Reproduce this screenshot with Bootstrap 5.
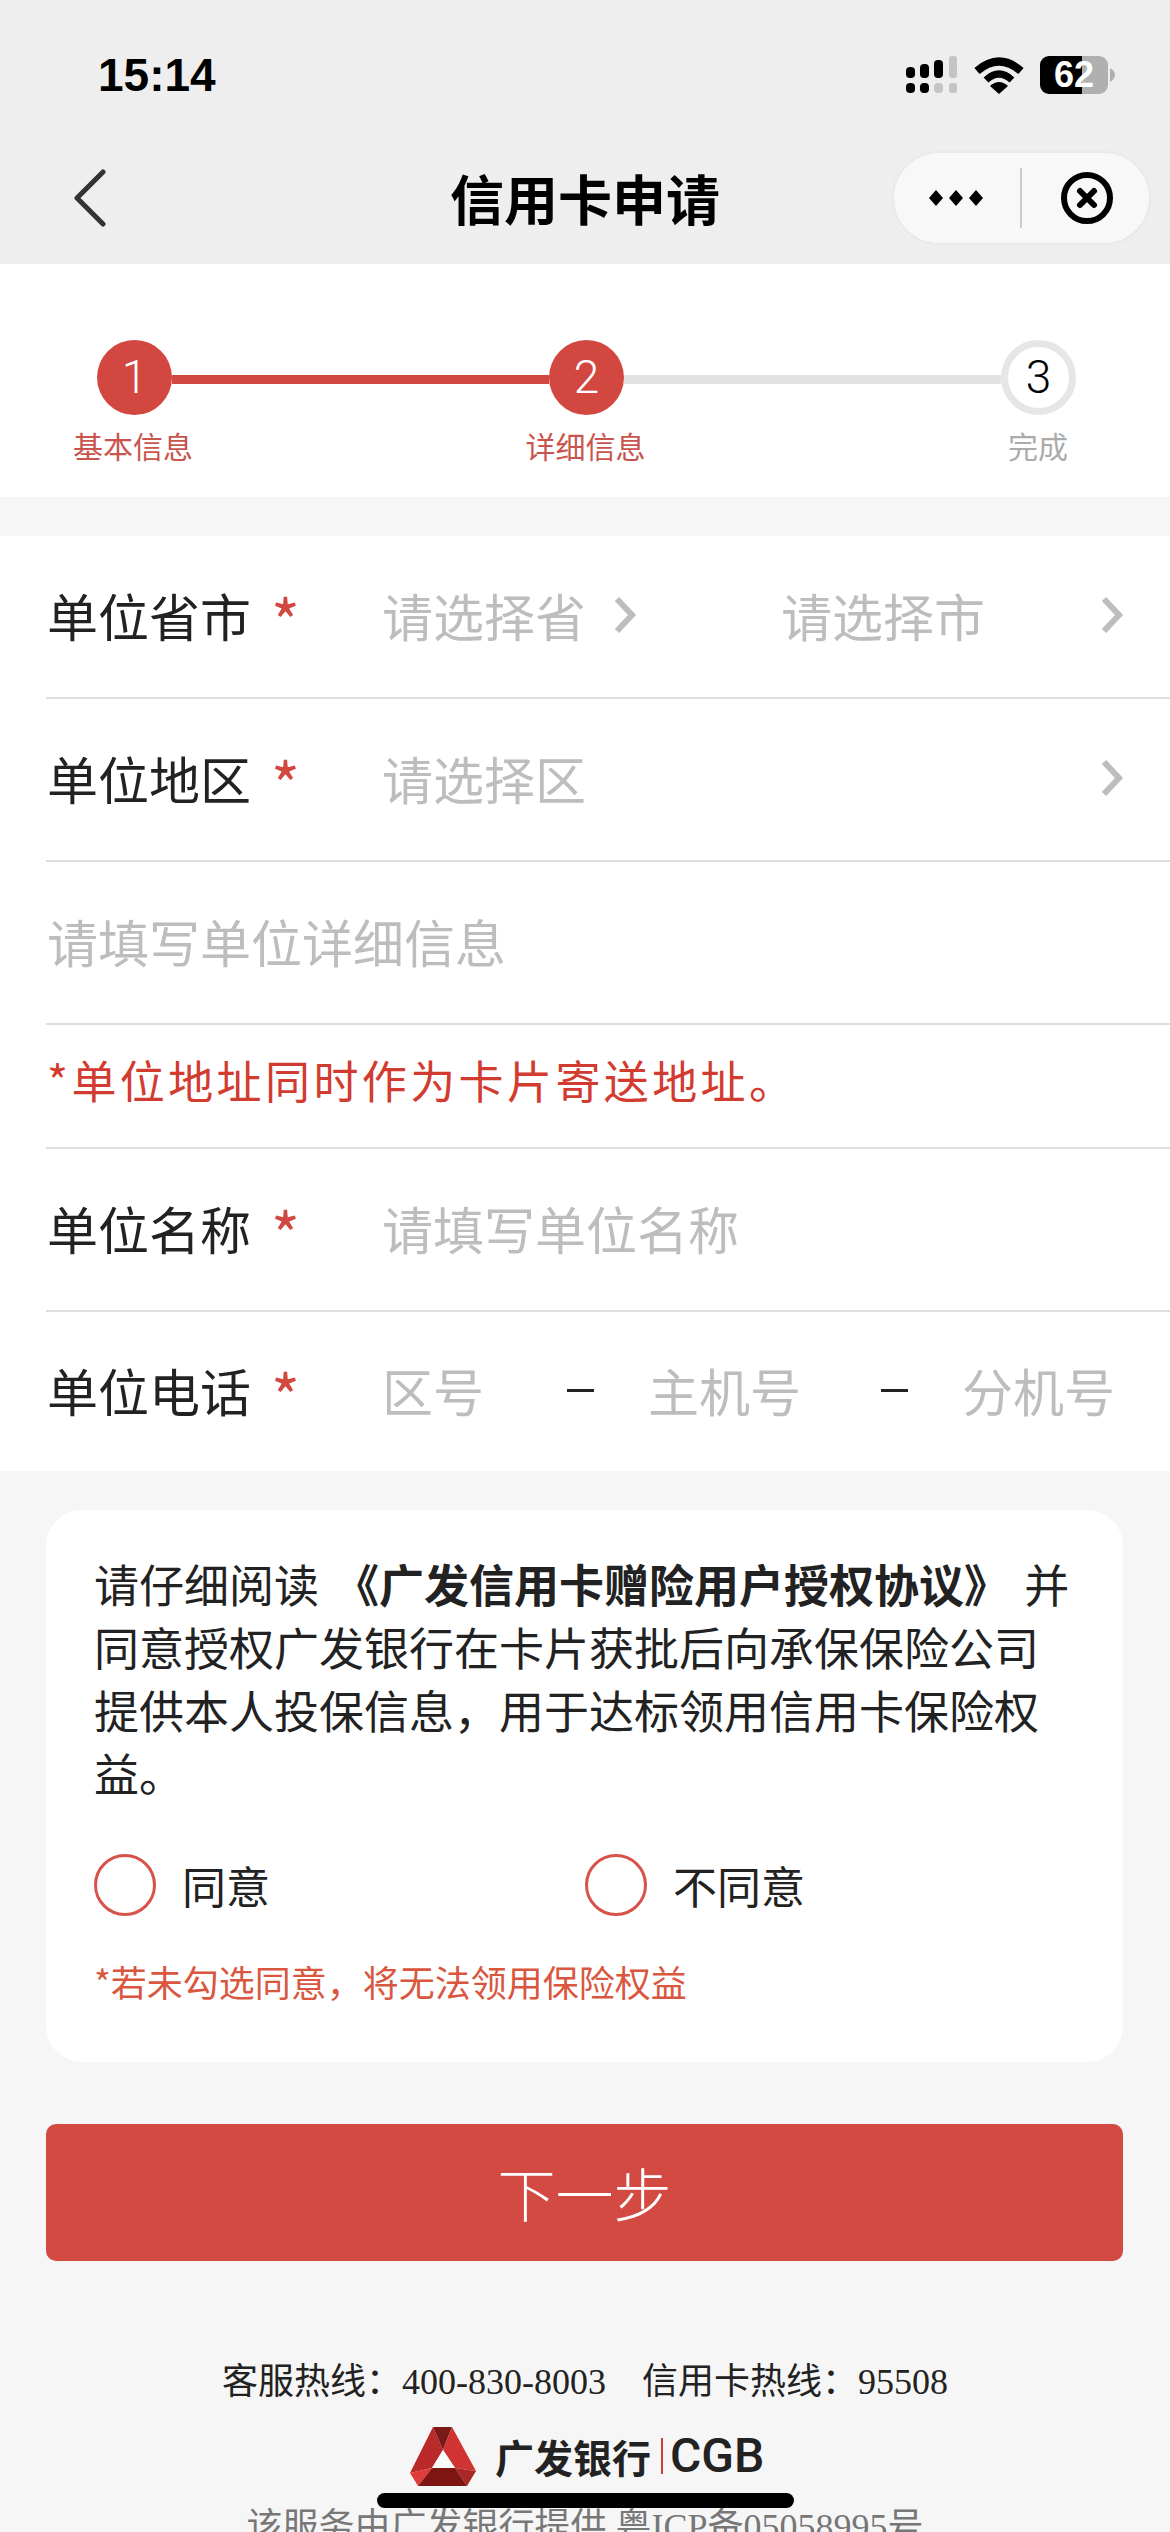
<!DOCTYPE html>
<html lang="zh">
<head>
    <meta charset="UTF-8">
    <title>信用卡申请</title>
    <link href="https://cdn.jsdelivr.net/npm/bootstrap@5.3.0/dist/css/bootstrap.min.css" rel="stylesheet">
    <style>
        html, body { height: 2532px; overflow: hidden; }
        body {
            background-color: #f6f6f6;
            color: #222;
            font-family: "Noto Sans CJK SC", sans-serif;
        }
        .top-area { background-color: #eeeeee; height: 264px; }
        .status-row { height: 140px; padding: 52px 55px 0 98px; }
        .clock { font: 700 46px/46px "Liberation Sans", sans-serif; color: #000; }
        .status-icons { margin-top: 4px; }
        .batt {
            width: 68px; height: 38px; border-radius: 9px; color: #fff;
            font: 700 36px/38px "Liberation Sans", sans-serif; text-align: center;
            background: linear-gradient(90deg, #000 62%, #b0b0b0 62%);
        }
        .batt-nub { margin-left: 2px; }
        .title-row { height: 124px; padding: 0 19px 8px 68px; }
        .page-title { font-size: 54px; font-weight: 700; line-height: 1; color: #000; margin-left: 344px; }
        .capsule {
            width: 259px; height: 94px; background-color: #f8f8f8;
            border: 2px solid #e9e9e9; border-radius: 47px;
        }
        .capsule-dots { margin-left: 34px; }
        .capsule-line { width: 2px; height: 60px; background-color: #ccc; margin-left: 36px; }
        .capsule-close { margin-left: 38px; }

        .steps-box { height: 233px; padding-top: 76px; }
        .steps-line { padding: 0 94px 0 97px; }
        .step-dot {
            width: 75px; height: 75px; flex: none; color: #fff; background-color: #d2473f;
            font: 300 46px/75px Roboto, sans-serif; text-align: center;
        }
        .step-dot-idle { background-color: #fff; color: #000; border: 7px solid #e6e6e6; line-height: 60px; }
        .step-bar { height: 9px; flex: 1; background-color: #d2473f; margin-top: 4px; }
        .step-bar-idle { background-color: #e2e2e2; }
        .steps-names { padding: 10px 57px 0 58px; }
        .step-name { width: 150px; text-align: center; font-size: 30px; line-height: 40px; color: #c9544d; }
        .step-name-idle { color: #ababab; }

        .form-box { margin-top: 39px; height: 935px; }
        .form-line {
            margin-left: 46px; height: 163px; padding: 0 46px 3px 1px; border-bottom: 2px solid #dedede;
            font-size: 51px; white-space: nowrap;
        }
        .form-line:last-child { border-bottom: 0; padding-bottom: 6px; }
        .form-line-note { height: 124px; padding-bottom: 12px; font-size: 45px; letter-spacing: 3.4px; color: #d23b30; }
        .form-label-text { width: 335px; flex: none; color: #222; }
        .req { color: #d2473f; margin-left: 20px; font-size: 62px; line-height: 0; vertical-align: -9px; }
        .hint { color: #bdbdbd; flex: none; }
        .hint-prov { width: 231px; }
        .hint-city { margin-left: 144px; }
        .hint-area { width: 185px; }
        .hint-main { margin-left: 54px; }
        .dash-ext { margin-left: 80px; }
        .hint-ext { margin-left: 54px; }
        .dash { width: 27px; height: 3px; background-color: #222; flex: none; }

        .consent-box {
            margin: 39px 47px 0 46px; height: 552px; padding: 42px 46px 0 48px;
            border-radius: 36px; background-color: #fff;
        }
        .consent-text { font-size: 45px; line-height: 63px; color: #222; word-spacing: 5px; }
        .radio-row { margin-top: 50px; font-size: 44px; line-height: 62px; }
        .radio-opt { width: 491px; }
        .consent-box .form-check-input {
            width: 62px; height: 62px; margin: 0 26px 0 0; flex: none;
            border: 3px solid #d6524a; background-color: #fff;
        }
        .warn-text { margin-top: 40px; font-size: 36px; line-height: 50px; color: #d9573f; }

        .next-btn {
            display: block; width: 1077px; height: 137px; margin: 62px 0 0 46px;
            background-color: #d34a43; border: 0; border-radius: 10px; color: #fff;
            font-size: 58px; font-weight: 300; line-height: 137px; padding: 0;
        }
        .hotline {
            margin-top: 96px; text-align: center; font: 36px/50px "Liberation Serif", "Noto Sans CJK SC", serif; color: #222;
            white-space: pre;
        }
        .logo-row { margin-top: 19px; height: 60px; padding-left: 410px; }
        .logo-cn { font-size: 39px; font-weight: 700; line-height: 60px; margin-left: 19px; color: #222; }
        .logo-sep { width: 2px; height: 36px; background-color: #c8413a; margin: 0 7px 0 10px; }
        .logo-en { font: 500 48px/60px Roboto, sans-serif; color: #222; }
        .home-bar { width: 417px; height: 15px; margin: 7px 0 0 377px; background-color: #000; border-radius: 8px; }
        .icp { margin-top: -1px; text-align: center; font: 36px/40px "Liberation Serif", "Noto Sans CJK SC", serif; color: #777; white-space: pre; }
    </style>
</head>
<body>
    <div class="top-area">
        <div class="status-row d-flex justify-content-between align-items-start">
            <div class="clock">15:14</div>
            <div class="status-icons d-flex align-items-center">
                <svg width="52" height="38" viewBox="0 0 52 38" class="d-block">
                    <rect x="0" y="11" width="9" height="11" rx="4" fill="#000"/>
                    <rect x="14" y="8" width="9" height="14" rx="4" fill="#000"/>
                    <rect x="28" y="4" width="9" height="18" rx="4" fill="#000"/>
                    <rect x="43" y="0" width="8" height="22" rx="3" fill="#c4c4c4"/>
                    <rect x="0" y="27" width="9" height="10" rx="4" fill="#000"/>
                    <rect x="14" y="27" width="9" height="10" rx="4" fill="#000"/>
                    <rect x="28" y="27" width="9" height="10" rx="4" fill="#c4c4c4"/>
                    <rect x="43" y="27" width="8" height="10" rx="3" fill="#c4c4c4"/>
                </svg>
                <svg width="50" height="38" viewBox="0 0 50 38" class="d-block ms-3">
                    <path d="M3 15 Q25 -4 47 15" fill="none" stroke="#000" stroke-width="8"/>
                    <path d="M12 24 Q25 12 38 24" fill="none" stroke="#000" stroke-width="7"/>
                    <path d="M16 30 Q25 22 34 30 L25 38 Z" fill="#000"/>
                </svg>
                <div class="batt ms-3">62</div>
                <svg width="5" height="14" viewBox="0 0 5 14" class="d-block batt-nub"><path d="M0 0 Q5 3 5 7 Q5 11 0 14 Z" fill="#b0b0b0"/></svg>
            </div>
        </div>
        <div class="title-row d-flex align-items-center">
            <svg width="38" height="58" viewBox="0 0 38 58" class="d-block flex-none">
                <path d="M35 3 L9 29 L35 55" fill="none" stroke="#333" stroke-width="5" stroke-linecap="round" stroke-linejoin="round"/>
            </svg>
            <div class="page-title">信用卡申请</div>
            <div class="capsule d-flex align-items-center ms-auto">
                <svg width="56" height="16" viewBox="0 0 56 16" class="d-block capsule-dots">
                    <path d="M8 0 L15 8 L8 16 L1 8 Z M28 0 L35 8 L28 16 L21 8 Z M48 0 L55 8 L48 16 L41 8 Z" fill="#000"/>
                </svg>
                <div class="capsule-line"></div>
                <svg width="54" height="54" viewBox="0 0 54 54" class="d-block capsule-close">
                    <circle cx="27" cy="27" r="23" fill="none" stroke="#000" stroke-width="6"/>
                    <path d="M20 20 L34 34 M34 20 L20 34" stroke="#000" stroke-width="6" stroke-linecap="round"/>
                </svg>
            </div>
        </div>
    </div>

    <div class="steps-box bg-white">
        <div class="steps-line d-flex align-items-center">
            <div class="step-dot rounded-circle">1</div>
            <div class="step-bar"></div>
            <div class="step-dot rounded-circle">2</div>
            <div class="step-bar step-bar-idle"></div>
            <div class="step-dot step-dot-idle rounded-circle">3</div>
        </div>
        <div class="steps-names d-flex justify-content-between">
            <div class="step-name">基本信息</div>
            <div class="step-name">详细信息</div>
            <div class="step-name step-name-idle">完成</div>
        </div>
    </div>

    <div class="form-box bg-white">
        <div class="form-line d-flex align-items-center">
            <div class="form-label-text">单位省市<span class="req">*</span></div>
            <div class="hint hint-prov">请选择省</div>
            <svg width="24" height="38" viewBox="0 0 24 38" class="d-block"><path d="M4 3 L19 19 L4 35" fill="none" stroke="#bdbdbd" stroke-width="6"/></svg>
            <div class="hint hint-city">请选择市</div>
            <svg width="24" height="38" viewBox="0 0 24 38" class="d-block ms-auto"><path d="M4 3 L19 19 L4 35" fill="none" stroke="#bdbdbd" stroke-width="6"/></svg>
        </div>
        <div class="form-line d-flex align-items-center">
            <div class="form-label-text">单位地区<span class="req">*</span></div>
            <div class="hint">请选择区</div>
            <svg width="24" height="38" viewBox="0 0 24 38" class="d-block ms-auto"><path d="M4 3 L19 19 L4 35" fill="none" stroke="#bdbdbd" stroke-width="6"/></svg>
        </div>
        <div class="form-line d-flex align-items-center">
            <div class="hint">请填写单位详细信息</div>
        </div>
        <div class="form-line form-line-note d-flex align-items-center">*单位地址同时作为卡片寄送地址。</div>
        <div class="form-line d-flex align-items-center">
            <div class="form-label-text">单位名称<span class="req">*</span></div>
            <div class="hint">请填写单位名称</div>
        </div>
        <div class="form-line d-flex align-items-center">
            <div class="form-label-text">单位电话<span class="req">*</span></div>
            <div class="hint hint-area">区号</div>
            <div class="dash"></div>
            <div class="hint hint-main">主机号</div>
            <div class="dash dash-ext"></div>
            <div class="hint hint-ext">分机号</div>
        </div>
    </div>

    <div class="consent-box">
        <div class="consent-text">请仔细阅读 <b>《广发信用卡赠险用户授权协议》</b> 并同意授权广发银行在卡片获批后向承保保险公司提供本人投保信息，用于达标领用信用卡保险权益。</div>
        <div class="radio-row d-flex">
            <label class="radio-opt d-flex align-items-center"><input class="form-check-input" type="radio" name="agree">同意</label>
            <label class="d-flex align-items-center"><input class="form-check-input" type="radio" name="agree">不同意</label>
        </div>
        <div class="warn-text">*若未勾选同意，将无法领用保险权益</div>
    </div>

    <button type="button" class="btn next-btn">下一步</button>

    <div class="hotline">客服热线：400-830-8003    信用卡热线：95508</div>
    <div class="logo-row d-flex align-items-center">
        <svg width="66" height="60" viewBox="0 0 66 60" class="d-block flex-none">
            <polygon points="23,1 33,24 22,42 0,47" fill="#bb2a2b"/>
            <polygon points="0,47 22,42 8,60" fill="#e03c3a"/>
            <polygon points="23,1 42,1 33,24" fill="#7a1a18"/>
            <polygon points="42,1 66,45 45,42 33,24" fill="#cf3432"/>
            <polygon points="45,42 66,45 57,60" fill="#a92826"/>
            <polygon points="22,42 45,42 57,60 8,60" fill="#7e1512"/>
            <polygon points="33,24 45,42 22,42" fill="#fbfbfb"/>
        </svg>
        <div class="logo-cn">广发银行</div>
        <div class="logo-sep"></div>
        <div class="logo-en">CGB</div>
    </div>
    <div class="home-bar"></div>
    <div class="icp">该服务由广发银行提供 粤ICP备05058995号</div>
</body>
</html>
